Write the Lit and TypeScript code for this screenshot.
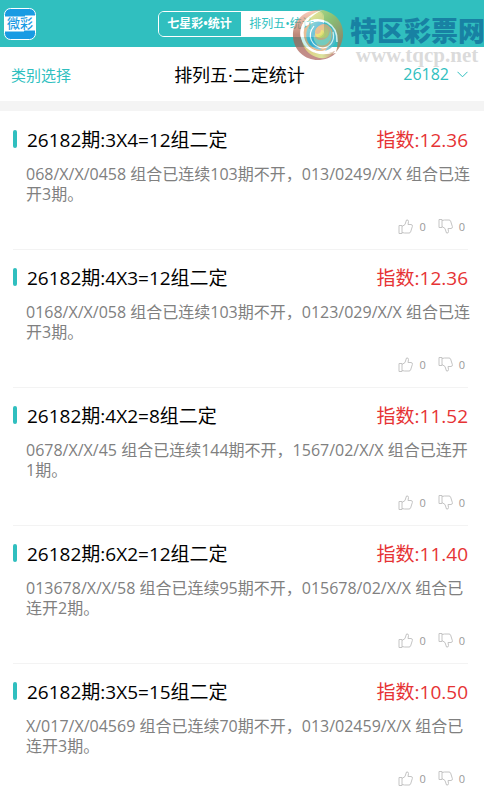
import { LitElement, html, css, svg } from "lit";
import { customElement, state } from "lit/decorators.js";

interface Entry {
  title: string;
  index: string;
  text: string;
  up: number;
  down: number;
}

const ENTRIES: Entry[] = [
  { title: "26182期:3X4=12组二定", index: "12.36", text: "068/X/X/0458 组合已连续103期不开，013/0249/X/X 组合已连开3期。", up: 0, down: 0 },
  { title: "26182期:4X3=12组二定", index: "12.36", text: "0168/X/X/058 组合已连续103期不开，0123/029/X/X 组合已连开3期。", up: 0, down: 0 },
  { title: "26182期:4X2=8组二定", index: "11.52", text: "0678/X/X/45 组合已连续144期不开，1567/02/X/X 组合已连开1期。", up: 0, down: 0 },
  { title: "26182期:6X2=12组二定", index: "11.40", text: "013678/X/X/58 组合已连续95期不开，015678/02/X/X 组合已连开2期。", up: 0, down: 0 },
  { title: "26182期:3X5=15组二定", index: "10.50", text: "X/017/X/04569 组合已连续70期不开，013/02459/X/X 组合已连开3期。", up: 0, down: 0 },
];

const thumbShape = svg`
  <path d="M1 6.5h3v8H1z M4 7.5L7 5.5L8.5 1Q10.5 0.5 10.5 2.5L10 5.5H13Q14.8 5.8 14.4 7.3L12.6 13Q12.2 14 11 14H6.5L4 13.5" />`;

@customElement("entry-item")
export class EntryItem extends LitElement {
  static properties = { entry: { attribute: false } };
  declare entry: Entry;

  static styles = css`
    :host {
      display: block;
      margin: 0 16px 0 13px;
      padding: 13px 0 14px;
      border-bottom: 1px solid #f3f3f3;
    }
    .head {
      display: flex;
      align-items: center;
      justify-content: space-between;
      height: 28px;
    }
    .title {
      display: flex;
      align-items: center;
      gap: 10px;
      margin: 0;
      font-size: 19px;
      font-weight: 400;
      color: #000;
    }
    .title::before {
      content: "";
      width: 4px;
      height: 18px;
      border-radius: 2px;
      background: #30bfbf;
    }
    .index {
      font-size: 19px;
      color: #e63334;
    }
    .text {
      margin: 11px -4px 14px 13px;
      font-size: 16px;
      line-height: 20px;
      color: #808080;
    }
    .votes {
      display: flex;
      justify-content: flex-end;
      gap: 12px;
      padding-right: 3px;
    }
    .vote {
      display: flex;
      align-items: center;
      gap: 6px;
      height: 17px;
      padding: 0;
      border: 0;
      background: none;
      font: inherit;
      font-size: 11px;
      color: #999;
      cursor: pointer;
    }
    .thumb {
      display: block;
      width: 15px;
      height: 15px;
      fill: none;
      stroke: #c4c4c4;
      stroke-width: 1;
      stroke-linejoin: round;
    }
  `;

  render() {
    const e = this.entry;
    return html`
      <div class="head">
        <h2 class="title">${e.title}</h2>
        <span class="index">指数:${e.index}</span>
      </div>
      <p class="text">${e.text}</p>
      <div class="votes">
        <button class="vote" aria-label="赞 ${e.up}">
          <svg class="thumb" viewBox="0 0 15 15">${thumbShape}</svg>${e.up}
        </button>
        <button class="vote" aria-label="踩 ${e.down}">
          <svg class="thumb" viewBox="0 0 15 15"><g transform="matrix(1 0 0 -1 0 15)">${thumbShape}</g></svg>${e.down}
        </button>
      </div>
    `;
  }
}

@customElement("app-root")
export class AppRoot extends LitElement {
  @state() private tab = 1;

  static styles = css`
    :host {
      display: block;
      padding-right: 10px;
      background: #fff;
      font-family: "Open Sans", "Noto Sans CJK SC", sans-serif;
    }
    .page {
      position: relative;
    }
    .top {
      display: grid;
      grid-template-columns: 1fr auto 1fr;
      align-items: center;
      height: 47px;
      padding: 0 7px 0 4px;
      background: #30bfbf;
    }
    .logo {
      display: block;
      width: 32px;
      height: 32px;
    }
    .logo-text {
      font-size: 13px;
      font-weight: 500;
      fill: #199be3;
    }
    .tabs {
      display: flex;
      height: 26px;
      box-sizing: border-box;
      border: 1px solid #fff;
      border-radius: 6px;
      overflow: hidden;
    }
    .tab {
      width: 82px;
      padding: 0;
      border: 0;
      background: #fff;
      font: inherit;
      font-size: 12px;
      line-height: 24px;
      color: #30bfbf;
      white-space: nowrap;
      cursor: pointer;
    }
    .tab.other {
      background: #30bfbf;
      color: #fff;
      font-weight: 700;
    }
    .bar {
      display: grid;
      grid-template-columns: 1fr auto 1fr;
      align-items: center;
      height: 54px;
      padding: 0 16px 0 11px;
      border-bottom: 10px solid #f4f4f4;
    }
    .category {
      font-size: 15px;
      color: #30bfbf;
      text-decoration: none;
    }
    .heading {
      margin: 0;
      font-size: 18px;
      font-weight: 400;
      color: #000;
    }
    .issue {
      display: flex;
      align-items: center;
      justify-self: end;
      gap: 8px;
      padding: 0;
      border: 0;
      background: none;
      font: inherit;
      font-size: 16px;
      color: #30bfbf;
      cursor: pointer;
    }
    .chevron {
      width: 11px;
      height: 7px;
      fill: none;
      stroke: #30bfbf;
    }
    .list {
      padding-top: 1px;
    }
    .mark {
      position: absolute;
      top: 9px;
      right: 0;
      display: flex;
      gap: 6px;
      pointer-events: none;
    }
    .swirl {
      width: 52px;
      height: 52px;
      opacity: 0.75;
    }
    .mark-text {
      display: flex;
      flex-direction: column;
      align-items: center;
      padding-top: 7px;
      white-space: nowrap;
    }
    .mark-name {
      font-size: 27px;
      font-weight: 900;
      line-height: 30px;
      color: #1881a3;
      margin-right: -1px;
    }
    .mark-site {
      font-family: "Liberation Serif", serif;
      font-size: 21px;
      font-weight: 700;
      line-height: 18px;
      color: rgba(205, 205, 205, 0.72);
    }
  `;

  render() {
    return html`
      <div class="page">
        <header class="top">
          <svg class="logo" viewBox="0 0 32 32" role="img" aria-label="微彩">
            <rect x=".5" y=".5" width="31" height="31" rx="6" fill="#199be3" stroke="#fff" />
            <path d="M1 8.5H21V7.5H31V22.5H20V23.5H1z" fill="#fff" />
            <text class="logo-text" x="3" y="20">微彩</text>
          </svg>
          <nav class="tabs">
            ${["七星彩•统计", "排列五•统计"].map(
              (name, i) => html`<button
                class="tab ${i === this.tab ? "" : "other"}"
                aria-pressed=${i === this.tab}
                @click=${() => (this.tab = i)}
              >${name}</button>`
            )}
          </nav>
        </header>
        <div class="bar">
          <a class="category" href="#category">类别选择</a>
          <h1 class="heading">排列五·二定统计</h1>
          <button class="issue">
            26182
            <svg class="chevron" viewBox="0 0 11 7"><path d="M.5 .8L5.5 5.8L10.5 .8" /></svg>
          </button>
        </div>
        <main class="list">
          ${ENTRIES.map((e) => html`<entry-item .entry=${e}></entry-item>`)}
        </main>
        <div class="mark">
          <svg class="swirl" viewBox="0 0 52 52" aria-hidden="true">
            <defs>
              <linearGradient id="rim" x1="0" y1="0" x2="0" y2="1">
                <stop offset="0" stop-color="#f0906a" stop-opacity=".6" />
                <stop offset=".5" stop-color="#a8604c" />
                <stop offset="1" stop-color="#b06a68" />
              </linearGradient>
              <linearGradient id="crest" x1="0" y1="0" x2="1" y2="1">
                <stop offset="0" stop-color="#f6ea86" />
                <stop offset=".45" stop-color="#a9c35c" />
                <stop offset="1" stop-color="#a8604c" />
              </linearGradient>
              <linearGradient id="base" x1="0" y1="0" x2="1" y2="0">
                <stop offset="0" stop-color="#d8b552" />
                <stop offset=".6" stop-color="#cfdc7c" />
                <stop offset="1" stop-color="#b9765c" />
              </linearGradient>
              <linearGradient id="sea" x1="0" y1="0" x2="1" y2="1">
                <stop offset="0" stop-color="#7fd6c0" />
                <stop offset=".5" stop-color="#30a5d6" />
                <stop offset="1" stop-color="#74c8d8" />
              </linearGradient>
              <linearGradient id="core" x1="0" y1="0" x2="1" y2="1">
                <stop offset="0" stop-color="#f0a070" />
                <stop offset="1" stop-color="#c9d45e" />
              </linearGradient>
            </defs>
            <path d="M31 1C13 -1 0 12 1 28C2 42 14 52 28 51C36 50 41 47 44 44C28 48 13 42 9 29C6 16 15 5 31 1z" fill="url(#rim)" />
            <path d="M31 1C44 4 52 14 51 27C50 35 47 40 44 43C49 28 42 12 26 11C19 10 14 12 10 17C13 8 21 3 31 1z" fill="url(#crest)" />
            <path d="M10 31C15 44 29 48 43 42C38 49 31 51 24 48C16 45 11 39 10 31z" fill="url(#base)" />
            <path d="M11 21C16 12 32 10 39 19C46 28 42 40 30 42C18 43 9 33 11 21z" fill="#e2a872" />
            <path d="M15 21C12 31 18 40 30 41C22 35 21 26 25 19C28 15 32 14 35 16C28 10 18 12 15 21z" fill="url(#sea)" />
            <path d="M40 17C48 27 44 39 33 42C39 34 42 26 40 17z" fill="#58b8cc" />
            <path d="M22 25C20 33 26 38 33 36C39 33 41 26 38 20C38 27 34 31 29 31C25 31 23 29 22 25z" fill="#8bd0bd" />
            <path d="M23 25C22 18 30 14 35 19C39 24 35 30 30 29C33 27 34 23 30 21C27 20 24 22 23 25z" fill="url(#core)" />
            <path d="M29 21C34 21 34 29 28 29C25 29 23 26 23 24C25 26 29 25 29 21z" fill="#e5d94e" />
            <path d="M31 1C15 5 6 16 9 29C12 42 27 49 43 43C28 46 15 41 12 28C10 16 18 6 31 1z" fill="#fff" />
            <path d="M13 15C29 5 46 15 45 33" fill="none" stroke="#fff" stroke-width="1.6" />
            <path d="M22 17C14 27 20 38 31 39C39 38 43 31 41 23" fill="none" stroke="#fff" stroke-width="1.2" />
          </svg>
          <div class="mark-text">
            <span class="mark-name">特区彩票网</span>
            <span class="mark-site">www.tqcp.net</span>
          </div>
        </div>
      </div>
    `;
  }
}
